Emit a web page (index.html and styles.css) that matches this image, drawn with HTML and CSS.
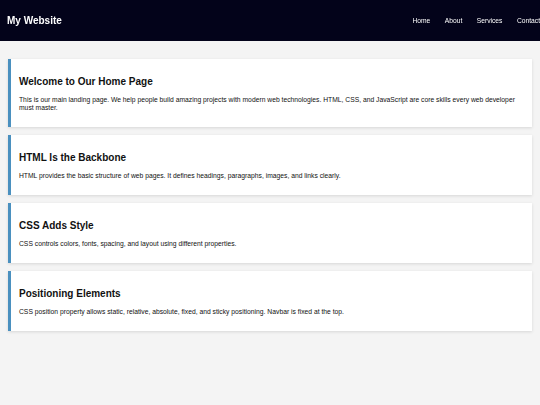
FILE: index.html
```html
<!DOCTYPE html>
<html lang="en">
<head>
    <meta charset="UTF-8">
    <meta name="viewport" content="width=device-width, initial-scale=1.0">
    <title>My Website</title>
    <link rel="stylesheet" href="styles.css">
</head>
<body>
    <nav class="navbar">
        <div class="logo">My Website</div>
        <ul class="nav-links">
            <li><a href="#">Home</a></li>
            <li><a href="#">About</a></li>
            <li><a href="#">Services</a></li>
            <li><a href="#">Contact</a></li>
        </ul>
    </nav>

    <main class="content">
        <section class="card">
            <h2>Welcome to Our Home Page</h2>
            <p>This is our main landing page. We help people build amazing projects with modern web technologies. HTML, CSS, and JavaScript are core skills every web developer must master.</p>
        </section>
        <section class="card">
            <h2>HTML Is the Backbone</h2>
            <p>HTML provides the basic structure of web pages. It defines headings, paragraphs, images, and links clearly.</p>
        </section>
        <section class="card">
            <h2>CSS Adds Style</h2>
            <p>CSS controls colors, fonts, spacing, and layout using different properties.</p>
        </section>
        <section class="card">
            <h2>Positioning Elements</h2>
            <p>CSS position property allows static, relative, absolute, fixed, and sticky positioning. Navbar is fixed at the top.</p>
        </section>
    </main>
</body>
</html>
```

FILE: styles.css
```css
body {
    margin: 0;
    font-family: "Liberation Sans", Arial, sans-serif;
    background-color: #f4f4f4;
    color: #111;
}
.navbar {
    position: fixed;
    top: 0;
    left: 0;
    box-sizing: border-box;
    width: 100%;
    height: 41px;
    padding: 0 0 0 7px;
    background: #03031a;
    color: white;
    display: flex;
    justify-content: space-between;
    align-items: center;
}
.logo {
    font-size: 10px;
    font-weight: bold;
}
.nav-links {
    list-style: none;
    display: flex;
    align-items: center;
    margin: 0;
    padding: 0;
    font-size: 6.7px;
}
.nav-links li {
    margin-left: 14.5px;
}
.nav-links a {
    color: white;
    text-decoration: none;
}
.content {
    padding: 59px 8px 20px;
}
.card {
    background: white;
    border-left: 3px solid #4a90bf;
    padding: 10px 8px 8px;
    margin-bottom: 8px;
    box-shadow: 0 1px 3px rgba(0, 0, 0, 0.12);
}
.card h2 {
    font-size: 10px;
    margin: 7px 0 9px;
}
.card p {
    font-size: 6.75px;
    line-height: 8px;
    margin: 7px 0;
}
```
